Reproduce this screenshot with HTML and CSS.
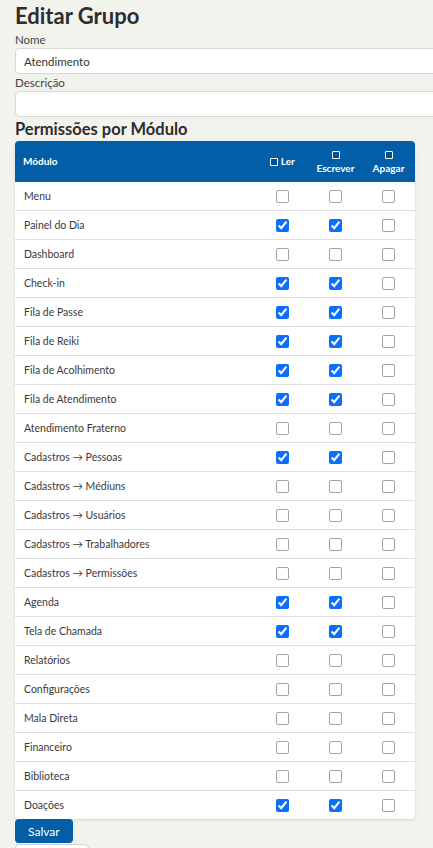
FILE: index.html
```html
<!DOCTYPE html>
<html lang="pt-BR">
<head>
<meta charset="utf-8">
<title>Editar Grupo</title>
<link rel="stylesheet" href="styles.css">
</head>
<body>
<main class="page">
  <h1 class="title">Editar Grupo</h1>
  <label class="field-label" for="nome">Nome</label>
  <input class="field" id="nome" type="text" value="Atendimento">
  <label class="field-label" for="desc">Descrição</label>
  <input class="field" id="desc" type="text" value="">
  <h2 class="section">Permissões por Módulo</h2>
  <div class="card">
    <table class="perm">
      <colgroup>
        <col class="c-mod"><col class="c-act"><col class="c-act"><col class="c-act">
      </colgroup>
      <thead>
        <tr>
          <th class="th-mod">Módulo</th>
          <th class="th-act"><span class="hbox"></span> Ler</th>
          <th class="th-act"><span class="hbox"></span> Escrever</th>
          <th class="th-act"><span class="hbox"></span> Apagar</th>
        </tr>
      </thead>
      <tbody>
        <tr><td>Menu</td><td><input type="checkbox"></td><td><input type="checkbox"></td><td><input type="checkbox"></td></tr>
        <tr><td>Painel do Dia</td><td><input type="checkbox" checked></td><td><input type="checkbox" checked></td><td><input type="checkbox"></td></tr>
        <tr><td>Dashboard</td><td><input type="checkbox"></td><td><input type="checkbox"></td><td><input type="checkbox"></td></tr>
        <tr><td>Check-in</td><td><input type="checkbox" checked></td><td><input type="checkbox" checked></td><td><input type="checkbox"></td></tr>
        <tr><td>Fila de Passe</td><td><input type="checkbox" checked></td><td><input type="checkbox" checked></td><td><input type="checkbox"></td></tr>
        <tr><td>Fila de Reiki</td><td><input type="checkbox" checked></td><td><input type="checkbox" checked></td><td><input type="checkbox"></td></tr>
        <tr><td>Fila de Acolhimento</td><td><input type="checkbox" checked></td><td><input type="checkbox" checked></td><td><input type="checkbox"></td></tr>
        <tr><td>Fila de Atendimento</td><td><input type="checkbox" checked></td><td><input type="checkbox" checked></td><td><input type="checkbox"></td></tr>
        <tr><td>Atendimento Fraterno</td><td><input type="checkbox"></td><td><input type="checkbox"></td><td><input type="checkbox"></td></tr>
        <tr><td>Cadastros → Pessoas</td><td><input type="checkbox" checked></td><td><input type="checkbox" checked></td><td><input type="checkbox"></td></tr>
        <tr><td>Cadastros → Médiuns</td><td><input type="checkbox"></td><td><input type="checkbox"></td><td><input type="checkbox"></td></tr>
        <tr><td>Cadastros → Usuários</td><td><input type="checkbox"></td><td><input type="checkbox"></td><td><input type="checkbox"></td></tr>
        <tr><td>Cadastros → Trabalhadores</td><td><input type="checkbox"></td><td><input type="checkbox"></td><td><input type="checkbox"></td></tr>
        <tr><td>Cadastros → Permissões</td><td><input type="checkbox"></td><td><input type="checkbox"></td><td><input type="checkbox"></td></tr>
        <tr><td>Agenda</td><td><input type="checkbox" checked></td><td><input type="checkbox" checked></td><td><input type="checkbox"></td></tr>
        <tr><td>Tela de Chamada</td><td><input type="checkbox" checked></td><td><input type="checkbox" checked></td><td><input type="checkbox"></td></tr>
        <tr><td>Relatórios</td><td><input type="checkbox"></td><td><input type="checkbox"></td><td><input type="checkbox"></td></tr>
        <tr><td>Configurações</td><td><input type="checkbox"></td><td><input type="checkbox"></td><td><input type="checkbox"></td></tr>
        <tr><td>Mala Direta</td><td><input type="checkbox"></td><td><input type="checkbox"></td><td><input type="checkbox"></td></tr>
        <tr><td>Financeiro</td><td><input type="checkbox"></td><td><input type="checkbox"></td><td><input type="checkbox"></td></tr>
        <tr><td>Biblioteca</td><td><input type="checkbox"></td><td><input type="checkbox"></td><td><input type="checkbox"></td></tr>
        <tr><td>Doações</td><td><input type="checkbox" checked></td><td><input type="checkbox" checked></td><td><input type="checkbox"></td></tr>
      </tbody>
    </table>
  </div>
  <div class="actions">
    <button class="btn btn-primary" type="button">Salvar</button>
    <button class="btn btn-ghost" type="button">Cancelar</button>
  </div>
</main>
</body>
</html>
```
FILE: styles.css
```css
* { box-sizing: border-box; }
html, body { margin: 0; padding: 0; }
body {
  background: #f3f3ee;
  font-family: Lato, "Liberation Sans", sans-serif;
  color: #333;
  overflow-x: hidden;
}
.page {
  width: 433px;
  padding: 0 18px 0 15px;
  display: flex;
  flex-direction: column;
  align-items: flex-start;
}
.title {
  font-size: 22px;
  font-weight: 700;
  line-height: 26px;
  margin: 3px 0 2px;
  color: #2d2d2d;
}
.field-label {
  font-size: 11.5px;
  line-height: 14px;
  color: #444;
  margin-top: 2px;
  margin-bottom: 1px;
}
.field {
  width: calc(100% + 30px);
  height: 26px;
  border: 1px solid #d8d8d4;
  border-radius: 4px;
  background: #fff;
  padding: 0 8px;
  font: inherit;
  font-size: 11.5px;
  color: #333;
}
.section {
  font-size: 16.5px;
  font-weight: 700;
  line-height: 20px;
  margin: 2px 0 2px;
  color: #2d2d2d;
}
.card {
  width: 100%;
  background: #fff;
  border-radius: 4px;
  box-shadow: 0 1px 3px rgba(0,0,0,0.13);
  overflow: hidden;
}
.perm {
  width: 100%;
  border-collapse: separate;
  border-spacing: 0;
  table-layout: fixed;
}
.c-mod { width: 241px; }
.c-act { width: 53px; }
.perm thead tr {
  background: #025ea7;
  color: #fff;
}
.perm th {
  height: 41px;
  font-size: 10px;
  font-weight: 700;
  line-height: 13px;
  padding: 0 6px;
}
.th-mod { text-align: left; padding-left: 8px !important; }
.th-act { text-align: center; }
.hbox {
  display: inline-block;
  width: 8px;
  height: 8px;
  border: 1px solid #fff;
  border-radius: 1px;
  background: rgba(0,0,0,0.15);
  vertical-align: -0.5px;
}
.perm td {
  box-sizing: content-box;
  height: 28px;
  padding: 0;
  font-size: 10.5px;
  color: #3a3a3a;
  text-align: center;
  vertical-align: middle;
}
.perm td:first-child {
  text-align: left;
  padding-left: 9px;
}
.perm tbody tr + tr td { border-top: 1px solid #dedede; }
.perm input[type="checkbox"] {
  width: 13px;
  height: 13px;
  margin: 0;
  vertical-align: middle;
  accent-color: #0b6efd;
}
.perm input[type="checkbox"]:not(:checked) {
  appearance: none;
  -webkit-appearance: none;
  background: #fff;
  border: 1px solid #a3a3a3;
  border-radius: 2px;
}
.actions {
  display: flex;
  flex-direction: column;
  align-items: flex-start;
  gap: 1px;
}
.btn {
  font: inherit;
  font-size: 12px;
  border-radius: 4px;
  height: 24px;
  padding: 0 13px;
  cursor: pointer;
}
.btn-primary {
  background: #025ea7;
  color: #fff;
  border: none;
}
.btn-ghost {
  background: #fff;
  color: #333;
  border: 1px solid #cfcfcf;
}
```
